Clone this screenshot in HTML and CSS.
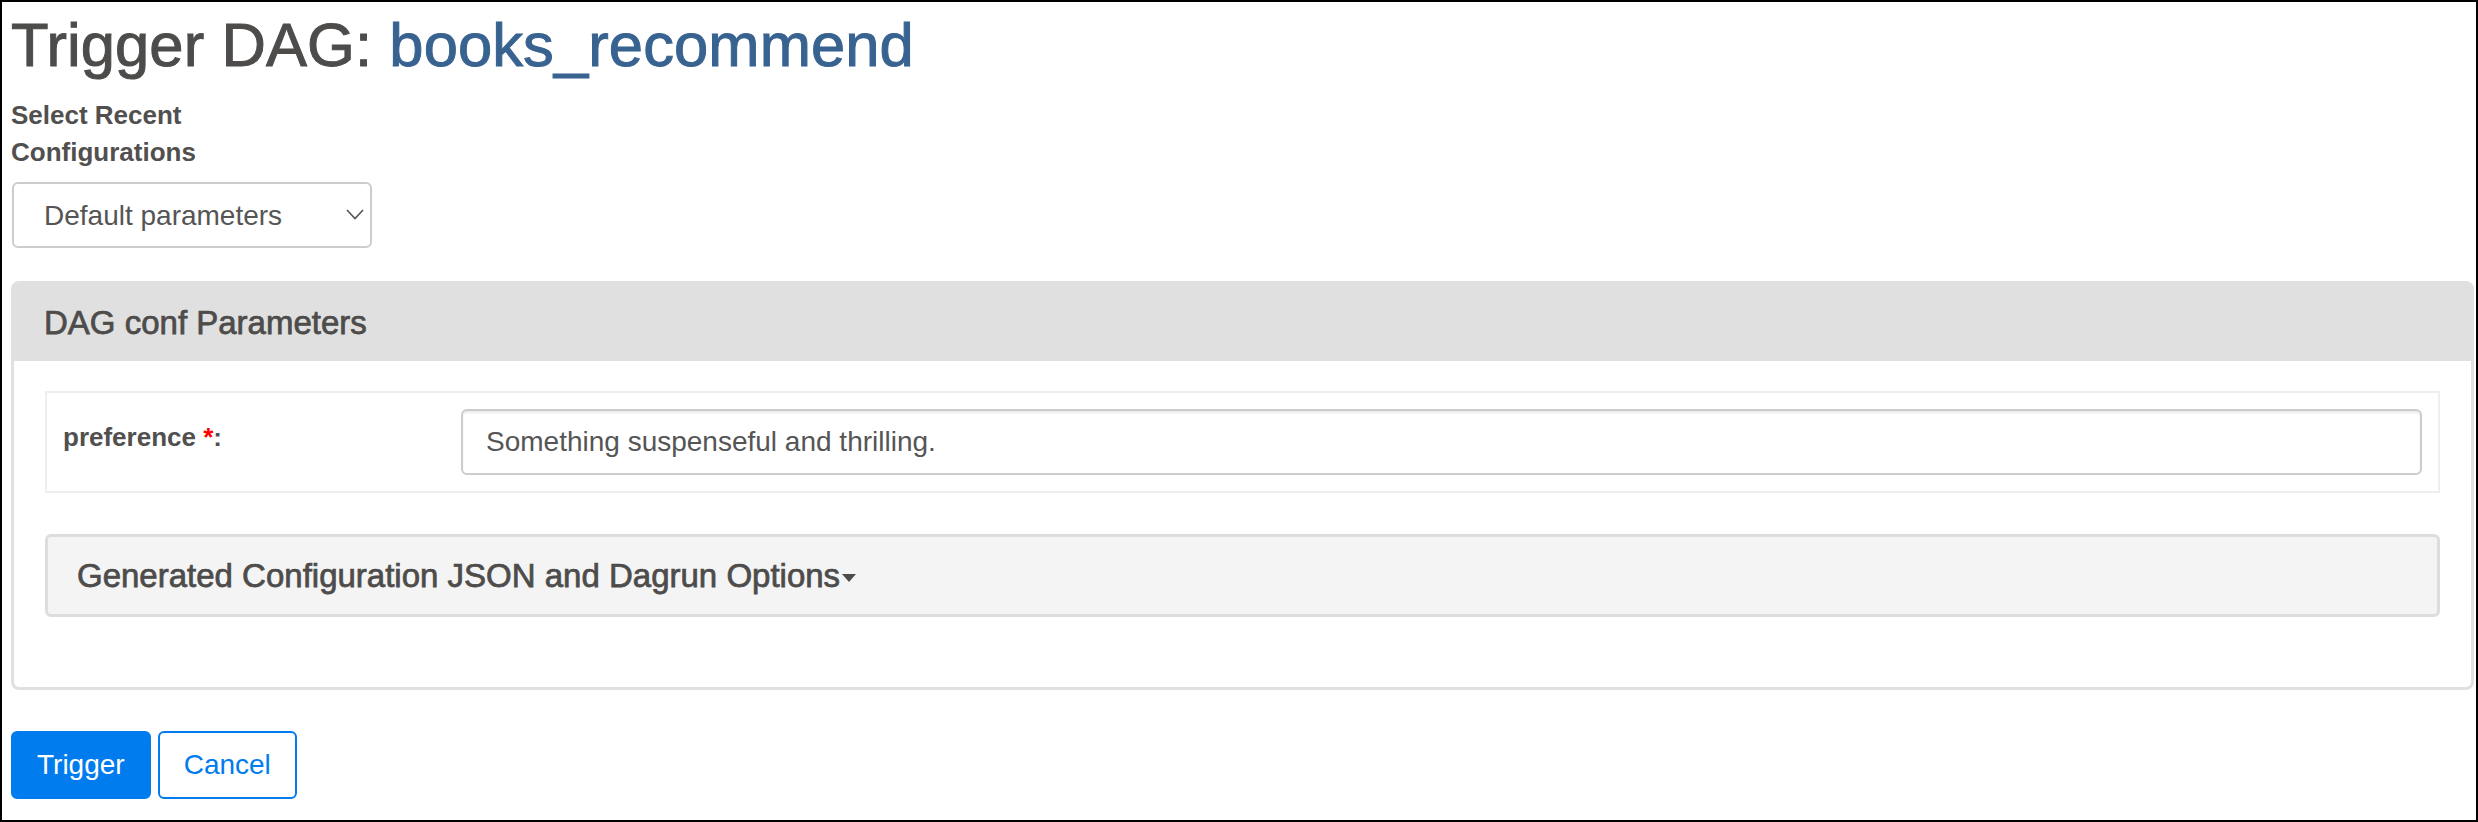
FILE: index.html
```html
<!DOCTYPE html>
<html lang="en">
<head>
<meta charset="utf-8">
<title>Trigger DAG: books_recommend</title>
<link rel="stylesheet" href="styles.css">
</head>
<body>
<div class="frame">
  <main class="page">
    <h2 class="page-title">Trigger DAG: <a class="dag-link" href="#">books_recommend</a></h2>
    <form class="trigger-form">
      <label class="recent-label" for="recent_configs">Select Recent Configurations</label>
      <div class="select-wrap">
        <select id="recent_configs" class="select-control">
          <option>Default parameters</option>
        </select>
        <svg class="select-chevron" width="18" height="11" viewBox="0 0 18 11" aria-hidden="true"><polyline points="1,1 9,9.5 17,1" fill="none" stroke="#555" stroke-width="1.6"/></svg>
      </div>
      <section class="panel">
        <div class="panel-heading"><h3 class="panel-title">DAG conf Parameters</h3></div>
        <div class="panel-body">
          <div class="field-row">
            <label class="field-label" for="preference">preference <span class="required">*</span>:</label>
            <input id="preference" class="text-input" type="text" value="Something suspenseful and thrilling.">
          </div>
          <div class="accordion">
            <button type="button" class="accordion-toggle">Generated Configuration JSON and Dagrun Options<span class="caret"></span></button>
          </div>
        </div>
      </section>
      <div class="actions">
        <button type="submit" class="btn btn-primary">Trigger</button>
        <a class="btn btn-outline" href="#">Cancel</a>
      </div>
    </form>
  </main>
</div>
</body>
</html>
```
FILE: styles.css
```css
* { box-sizing: border-box; }
html, body { margin: 0; padding: 0; background: #fff; overflow: hidden; }
body { font-family: "Liberation Sans", Arial, Helvetica, sans-serif; color: #51504f; }

.frame { width: 2478px; height: 822px; border: 2px solid #000; padding: 0 2px 0 9px; }

.page-title { margin: 10px 0 19px; font-size: 61.5px; line-height: 66px; font-weight: 400; color: #4d4c4b; -webkit-text-stroke: 1px currentColor; letter-spacing: 0.1px; }
.dag-link { color: #386390; text-decoration: none; }

.trigger-form { margin: 0; }

.recent-label { display: block; width: 200px; font-size: 26px; line-height: 37px; font-weight: 700; margin-bottom: 11px; color: #51504f; }

.select-wrap { position: relative; width: 360px; height: 66px; margin-left: 1px; }
.select-control { appearance: none; -webkit-appearance: none; display: block; width: 100%; height: 100%; margin: 0; border: 2px solid #cccccc; border-radius: 6px; background: #fff; font-family: "Liberation Sans", Arial, sans-serif; font-size: 28px; color: #555; padding: 0 40px 0 30px; }
.select-chevron { position: absolute; right: 8px; top: 27px; pointer-events: none; }

.panel { margin-top: 33px; border: 3px solid #e0e0e0; border-radius: 8px; background: #fff; }
.panel-heading { background: #e0e0e0; padding: 21px 31px 21px 30px; }
.panel-title { margin: 0; font-size: 33px; line-height: 35px; font-weight: 400; color: #4d4c4b; -webkit-text-stroke: 0.75px currentColor; }
.panel-body { padding: 30px 31px; }

.field-row { display: grid; grid-template-columns: 398px 1fr; align-items: start; border: 2px solid #eeeeee; padding: 16px; }
.field-label { font-size: 26px; line-height: 37px; font-weight: 700; padding-top: 10px; color: #51504f; }
.required { color: #ff0000; }
.text-input { display: block; width: 100%; height: 66px; margin: 0; border: 2px solid #cccccc; border-radius: 6px; padding: 0 23px; font-family: "Liberation Sans", Arial, sans-serif; font-size: 28px; color: #555; background: #fff; box-shadow: inset 0 2px 2px rgba(0,0,0,0.075); }

.accordion { margin-top: 41px; margin-bottom: 40px; border: 3px solid #dddddd; border-radius: 6px; background: #f4f4f4; }
.accordion-toggle { display: block; width: 100%; margin: 0; background: transparent; border: 0; text-align: left; padding: 21px 29px; font-family: "Liberation Sans", Arial, sans-serif; font-size: 33px; line-height: 35px; color: #4d4c4b; -webkit-text-stroke: 0.75px currentColor; cursor: pointer; }
.caret { display: inline-block; width: 0; height: 0; border-top: 8px solid #4d4c4b; border-left: 7px solid transparent; border-right: 7px solid transparent; vertical-align: middle; margin-left: 2px; }

.actions { margin-top: 41px; display: flex; gap: 7px; }
.btn { display: inline-block; height: 68px; margin: 0; padding: 12px 24px; font-family: "Liberation Sans", Arial, sans-serif; font-size: 28px; line-height: 40px; border: 2px solid #017cee; border-radius: 6px; cursor: pointer; }
.btn-primary { background: #017cee; color: #fff; }
.btn-outline { background: #fff; color: #017cee; text-decoration: none; }
```
